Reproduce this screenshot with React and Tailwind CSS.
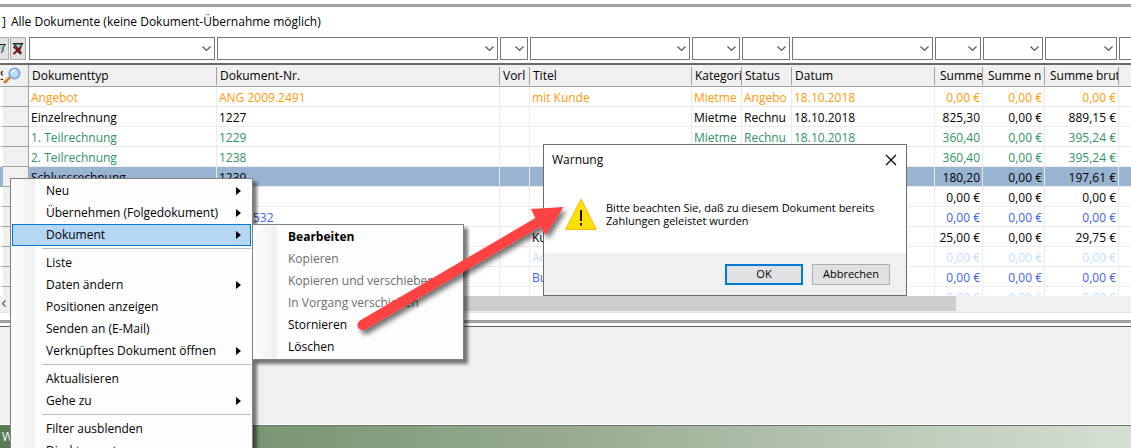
import React from "react";

const columns = [
  { label: "Dokumenttyp", width: "w-[188px]" },
  { label: "Dokument-Nr.", width: "w-[283px]" },
  { label: "Vorl", width: "w-[30px]" },
  { label: "Titel", width: "w-[162px]" },
  { label: "Kategori", width: "w-[50px]" },
  { label: "Status", width: "w-[50px]" },
  { label: "Datum", width: "w-[143px]" },
  { label: "Summe", width: "w-[48px]", right: true },
  { label: "Summe n", width: "w-[62px]", right: true },
  { label: "Summe brut", width: "w-[74px]", right: true },
];

const rows = [
  { color: "text-[#ff9a0a]", cells: ["Angebot", "ANG 2009.2491", "", "mit Kunde", "Mietme", "Angebo", "18.10.2018", "0,00 €", "0,00 €", "0,00 €"] },
  { color: "text-black", cells: ["Einzelrechnung", "1227", "", "", "Mietme", "Rechnu", "18.10.2018", "825,30", "0,00 €", "889,15 €"] },
  { color: "text-[#2e9464]", cells: ["1. Teilrechnung", "1229", "", "", "Mietme", "Rechnu", "18.10.2018", "360,40", "0,00 €", "395,24 €"] },
  { color: "text-[#2e9464]", cells: ["2. Teilrechnung", "1238", "", "", "", "", "", "360,40", "0,00 €", "395,24 €"] },
  { color: "text-black", selected: true, cells: ["Schlussrechnung", "1239", "", "", "", "", "", "180,20", "0,00 €", "197,61 €"] },
  { color: "text-black", cells: ["", "", "", "", "", "", "", "0,00 €", "0,00 €", "0,00 €"] },
  { color: "text-[#4060f0]", indent: true, cells: ["", "532", "", "", "", "", "", "0,00 €", "0,00 €", "0,00 €"] },
  { color: "text-black", cells: ["", "", "", "Ku", "", "", "", "25,00 €", "0,00 €", "29,75 €"] },
  { color: "text-[#c0e0ff]", cells: ["", "", "", "An", "", "", "", "0,00 €", "0,00 €", "0,00 €"] },
  { color: "text-[#4060f0]", cells: ["", "", "", "Bu", "", "", "", "0,00 €", "0,00 €", "0,00 €"] },
  { color: "text-[#c0e0ff]", cells: ["", "", "", "", "", "", "", "0,00 €", "0,00 €", "0,00 €"] },
];

const mainMenu = [
  { label: "Neu", sub: true },
  { label: "Übernehmen (Folgedokument)", sub: true },
  { label: "Dokument", sub: true, active: true },
  null,
  { label: "Liste" },
  { label: "Daten ändern", sub: true },
  { label: "Positionen anzeigen" },
  { label: "Senden an (E-Mail)" },
  { label: "Verknüpftes Dokument öffnen", sub: true },
  null,
  { label: "Aktualisieren" },
  { label: "Gehe zu", sub: true },
  null,
  { label: "Filter ausblenden" },
  { label: "Direktexport" },
];

const subMenu = [
  { label: "Bearbeiten", bold: true },
  { label: "Kopieren", disabled: true },
  { label: "Kopieren und verschieben", disabled: true },
  { label: "In Vorgang verschieben", disabled: true },
  { label: "Stornieren" },
  { label: "Löschen" },
];

function Combo({ label, width }) {
  return (
    <div className={`relative shrink-0 pr-[2px] ${width}`}>
      <select
        aria-label={`Filter ${label}`}
        className="block h-[23px] w-full appearance-none rounded-none border border-[#767676] bg-white"
      />
      <svg className="pointer-events-none absolute top-[9px] right-[6px]" width="9" height="6" viewBox="0 0 9 6" aria-hidden="true">
        <path d="M.5 .5 4.500 4.500 8.500 .5" fill="none" stroke="#555" strokeWidth="1.2" />
      </svg>
    </div>
  );
}

function FunnelIcon() {
  return (
    <svg width="12" height="14" viewBox="0 0 12 14" aria-hidden="true">
      <path d="M1.500 1.500h9L8 6v5.500L5.500 9.500V6z" fill="#b9cbc8" stroke="#222" strokeWidth="1.200" />
      <path d="M3 2.500h6" stroke="#3a9c98" />
      <path d="m1.500 4.500 8 7M9 5l-7.500 7" stroke="#7d1414" strokeWidth="1.900" />
    </svg>
  );
}

function MagnifierIcon() {
  return (
    <svg width="18" height="18" viewBox="0 0 18 18" aria-hidden="true">
      <path d="m2 15 5-5" stroke="#c8752c" strokeWidth="3" strokeLinecap="round" />
      <path d="m2 14 4-4" stroke="#eeb070" strokeWidth="1" />
      <circle cx="11.500" cy="6.500" r="5.200" fill="#b5dcf8" stroke="#7ba6dc" strokeWidth="1.700" />
      <path d="M8.500 6a3 3 0 0 1 4-2.500" fill="none" stroke="#fff" strokeWidth="1.700" />
    </svg>
  );
}

function MenuItem({ item }) {
  if (!item) return <div role="separator" className="mt-[2px] mb-[3px] ml-[30px] h-px bg-[#bdbdbd]" />;
  const tone = item.disabled ? "text-[#6d6d6d]" : "text-black";
  const weight = item.bold ? "font-bold" : "";
  const frame = item.active ? "border-[#0078d7] bg-[#b5d7f3]" : "border-transparent";
  return (
    <button
      type="button"
      role="menuitem"
      disabled={item.disabled}
      className={`flex h-[22px] w-full items-center justify-between border pr-[9px] pl-[33px] text-left whitespace-nowrap ${tone} ${weight} ${frame}`}
    >
      {item.label}
      {item.sub && (
        <svg width="5" height="8" viewBox="0 0 5 8" aria-hidden="true">
          <path d="M0 0l5 4-5 4z" fill="#000" />
        </svg>
      )}
    </button>
  );
}

const menuFrame =
  "absolute border border-[#808080] bg-[linear-gradient(to_right,#fdfdfd,#f0f0f0_24px,#fdfdfd_24px)] p-px shadow-[4px_4px_3px_rgba(0,0,0,0.5)]";

export default function App() {
  return (
    <div className="relative flex h-screen flex-col overflow-hidden bg-white font-['Open_Sans','Noto_Sans',sans-serif] text-[12px] leading-[16px] text-black">
      <div className="mt-[4px] h-[3px] shrink-0 border-y border-[#999] bg-[#a9b3a5]" />
      <h1 className="flex h-[30px] shrink-0 items-center gap-[5px] pl-[2px]">
        <span>]</span>
        <span>Alle Dokumente (keine Dokument-Übernahme möglich)</span>
      </h1>

      <div className="flex shrink-0 border-b-2 border-[#6a6a6a] pb-[3px]">
        <div className="flex w-[29px] shrink-0 gap-px">
          <button type="button" aria-label="Filter anwenden" className="flex h-[23px] w-[9px] items-center overflow-hidden border border-l-0 border-[#adadad] bg-[#e1e1e1]">
            <svg width="6" height="12" viewBox="0 0 6 12" aria-hidden="true">
              <path d="M0 1.500h5.500L3 5v3L1 10" fill="#9ed0cc" stroke="#222" />
            </svg>
          </button>
          <button type="button" aria-label="Filter löschen" className="flex h-[23px] w-[16px] items-center justify-center border border-[#adadad] bg-[#e1e1e1]">
            <FunnelIcon />
          </button>
        </div>
        {columns.map((c) => (
          <Combo key={c.label} label={c.label} width={c.width} />
        ))}
        <div className="h-[23px] flex-1 border border-r-0 border-[#767676]" />
      </div>

      <div className="h-[231px] shrink-0 overflow-hidden">
        <table className="w-full table-fixed border-separate border-spacing-0">
          <thead>
            <tr className="h-[22px] bg-[#f0f0f0]">
              <th scope="col" className="w-[29px] overflow-hidden border-r border-b border-[#a0a0a0] p-0">
                <div className="flex h-[21px] items-center overflow-hidden font-normal">
                  <span className="w-[3px] overflow-hidden">S</span>
                  <MagnifierIcon />
                </div>
              </th>
              {columns.map((c) => (
                <th key={c.label} scope="col" className={`border-b border-[#a0a0a0] p-0 font-normal ${c.width}`}>
                  <div className={`flex h-[18px] items-center overflow-hidden border-r border-[#a0a0a0] whitespace-nowrap ${c.right ? "pl-[5px]" : "pl-[3px]"}`}>
                    {c.label}
                  </div>
                </th>
              ))}
              <th scope="col" className="border-b border-[#a0a0a0] p-0" />
            </tr>
          </thead>
          <tbody>
            {rows.map((r, i) => (
              <tr key={i} className={`h-[20px] ${r.color} ${r.selected ? "bg-[#99b4d1]" : ""}`}>
                <td className={`border-r border-b border-l-[3px] border-r-[#a0a0a0] border-b-[#a0a0a0] bg-[#f0f0f0] p-0 ${r.selected ? "border-l-[#99b4d1]" : "border-l-white"}`} />
                {r.cells.map((text, j) => (
                  <td
                    key={j}
                    className={`overflow-hidden border-r border-b border-[#ececec] pt-[2px] pb-0 whitespace-nowrap ${j > 6 ? "pr-[2px] pl-0 text-right" : r.indent && j === 1 ? "pr-0 pl-[36px]" : "pr-0 pl-[2px]"}`}
                  >
                    {text}
                  </td>
                ))}
                <td className="border-b border-[#ececec] p-0" />
              </tr>
            ))}
          </tbody>
        </table>
      </div>

      <div className="flex h-[17px] shrink-0 border-b border-[#e3e3e3] bg-[#f0f0f0]">
        <button type="button" aria-label="Nach links" className="flex h-[15px] w-[17px] items-center pl-[2px]">
          <svg width="4" height="7" viewBox="0 0 4 7" aria-hidden="true">
            <path d="M3.500 .5.5 3.500l3 3" fill="none" stroke="#555" strokeWidth="1.200" />
          </svg>
        </button>
        <div className="h-[15px] w-[83%] bg-[#cdcdcd]" />
      </div>
      <div className="mt-[7px] h-[3px] shrink-0 border-y border-[#999] bg-[#a9b3a5]" />
      <div className="mt-[3px] flex-1 border-t border-b border-t-[#6a6a6a] border-b-white bg-[#f0f0f0]" />
      <div className="h-[23px] shrink-0 border-t border-[#6d746b] bg-[linear-gradient(to_right,#5a7854,#7a9673_23%,#95a98f_48%,#d5e0d2)] pt-[3px] pl-[2px] text-white">
        W
      </div>

      <div role="menu" aria-label="Kontextmenü" className={`${menuFrame} top-[178px] left-[10px] w-[243px]`}>
        {mainMenu.map((item, i) => (
          <MenuItem key={i} item={item} />
        ))}
      </div>

      <div role="menu" aria-label="Dokument" className={`${menuFrame} top-[224px] left-[252px] w-[212px]`}>
        {subMenu.map((item) => (
          <MenuItem key={item.label} item={item} />
        ))}
      </div>

      <div role="dialog" aria-label="Warnung" className="absolute top-[144px] left-[543px] flex w-[364px] flex-col border border-[#6b6b6b] bg-white">
        <div className="flex h-[29px] items-center justify-between pr-[9px] pl-[8px]">
          <h2>Warnung</h2>
          <button type="button" aria-label="Schließen">
            <svg width="12" height="12" viewBox="0 0 12 12" aria-hidden="true">
              <path d="m1 1 10 10M11 1 1 11" stroke="#000" strokeWidth="1.200" />
            </svg>
          </button>
        </div>
        <div className="flex h-[79px] items-start gap-[9px] pt-[24px] pl-[21px] text-[11px] leading-[13px]">
          <svg width="32" height="32" viewBox="0 0 32 32" aria-hidden="true">
            <path d="M16 1 31.500 31.500H.5z" fill="#ffe000" stroke="#fdb913" />
            <path d="M16 12v11" stroke="#111" strokeWidth="2" />
            <path d="M16 25v2.500" stroke="#111" strokeWidth="2" />
          </svg>
          <p className="pt-[3px] whitespace-nowrap">
            Bitte beachten Sie, daß zu diesem Dokument bereits
            <br />
            Zahlungen geleistet wurden
          </p>
        </div>
        <div className="flex h-[42px] items-center justify-end gap-[9px] bg-[#f0f0f0] pr-[16px] text-[11px]">
          <button type="button" className="h-[21px] w-[78px] border-2 border-[#0078d7] bg-[#e1e1e1] leading-[16px]">OK</button>
          <button type="button" className="h-[21px] w-[78px] border border-[#adadad] bg-[#e1e1e1] leading-[16px]">Abbrechen</button>
        </div>
      </div>

      <svg className="pointer-events-none absolute top-[195px] left-[350px]" width="225" height="150" viewBox="350 195 225 150" aria-hidden="true">
        <defs>
          <filter id="arrowShadow" x="-10%" y="-10%" width="125%" height="130%">
            <feDropShadow dx="3" dy="4" stdDeviation="2.500" floodColor="#000" floodOpacity="0.550" />
          </filter>
        </defs>
        <path
          d="M360 320.500 535.500 218 531 209 563.500 207 545.500 235 540.500 226.500 365.500 329.500A5.200 5.200 0 0 1 360 320.500z"
          fill="#fd4343"
          filter="url(#arrowShadow)"
        />
      </svg>
    </div>
  );
}
